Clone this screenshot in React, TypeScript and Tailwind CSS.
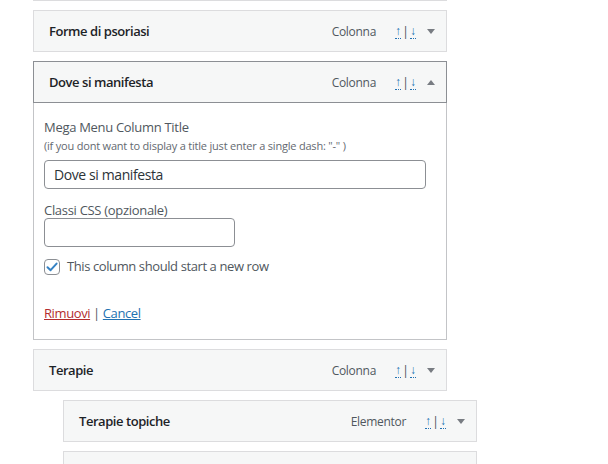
import React from "react";

const font = "font-['Open_Sans','Noto_Sans',sans-serif]";

function Arrows() {
  return (
    <span className="flex items-center text-[12px] leading-none text-[#2271b1]">
      <span className="w-[6px] flex justify-center border-b border-dotted border-[#2271b1] pb-[1px]">↑</span>
      <span className="w-[9px] flex justify-center text-[#50575e] text-[13px]">|</span>
      <span className="w-[6px] flex justify-center border-b border-dotted border-[#2271b1] pb-[1px]">↓</span>
    </span>
  );
}

function Triangle({ up }: { up?: boolean }) {
  return up ? (
    <span className="block w-0 h-0 border-l-[4px] border-r-[4px] border-b-[5px] border-l-transparent border-r-transparent border-b-[#787c82]" />
  ) : (
    <span className="block w-0 h-0 border-l-[4px] border-r-[4px] border-t-[5px] border-l-transparent border-r-transparent border-t-[#787c82]" />
  );
}

function Header({
  title,
  type,
  active,
  up,
}: {
  title: string;
  type: string;
  active?: boolean;
  up?: boolean;
}) {
  return (
    <div
      className={`flex items-center h-[42px] bg-[#f6f7f7] border pl-[15px] pr-[11px] pt-[1px] ${
        active ? "border-[#8c8f94]" : "border-[#dcdcde]"
      }`}
    >
      <span className="flex-1 text-[13px] font-semibold text-[#1d2327] tracking-[-0.45px]">{title}</span>
      {type && (
        <>
          <span className="text-[12px] text-[#50575e] tracking-[-0.3px]">{type}</span>
          <span className="ml-[19px]">
            <Arrows />
          </span>
          <span className="ml-[11px]">
            <Triangle up={up} />
          </span>
        </>
      )}
    </div>
  );
}

export default function App() {
  return (
    <div className={`w-[608px] h-[464px] bg-white overflow-hidden pl-[33px] ${font}`}>
      <div className="w-[414px] h-[1px] bg-[#dcdcde]" />
      <div className="w-[414px] mt-[9px]">
        <Header title="Forme di psoriasi" type="Colonna" />
      </div>
      <div className="w-[414px] mt-[9px]">
        <Header title="Dove si manifesta" type="Colonna" active up />
        <div className="border border-t-0 border-[#c3c4c7] px-[10px] pt-[15px] h-[237px]">
          <div className="text-[13px] leading-[18px] text-[#50575e] tracking-[-0.3px]">Mega Menu Column Title</div>
          <div className="mt-[3px] text-[11px] leading-[14px] text-[#646970] tracking-[-0.2px]">
            (if you dont want to display a title just enter a single dash: "-" )
          </div>
          <div className="mt-[7px] w-[382px] h-[29px] rounded-[4px] border border-[#8c8f94] flex items-center px-[9px] text-[14px] text-[#2c3338] tracking-[-0.4px]">
            Dove si manifesta
          </div>
          <div className="mt-[13px] text-[13px] leading-[16px] text-[#50575e] tracking-[-0.3px]">Classi CSS (opzionale)</div>
          <div className="w-[191px] h-[29px] rounded-[4px] border border-[#8c8f94]" />
          <div className="mt-[10px] h-[20px] flex items-center">
            <span className="w-[16px] h-[16px] rounded-[4px] border border-[#8c8f94] flex items-center justify-center bg-white">
              <svg width="14" height="14" viewBox="0 0 14 14">
                <path d="M2.5 7.2 L5.6 10.2 L11.6 3.6" fill="none" stroke="#3582c4" strokeWidth="2" strokeLinecap="round" strokeLinejoin="round" />
              </svg>
            </span>
            <span className="ml-[7px] text-[13px] text-[#50575e] tracking-[-0.4px]">This column should start a new row</span>
          </div>
          <div className="mt-[26px] text-[13px] leading-[20px] tracking-[-0.4px]">
            <span className="text-[#b32d2e] underline">Rimuovi</span>
            <span className="text-[#50575e]"> | </span>
            <span className="text-[#2271b1] underline">Cancel</span>
          </div>
        </div>
      </div>
      <div className="w-[414px] mt-[9px]">
        <Header title="Terapie" type="Colonna" />
      </div>
      <div className="w-[414px] mt-[9px] ml-[30px]">
        <Header title="Terapie topiche" type="Elementor" />
      </div>
      <div className="w-[414px] mt-[9px] ml-[30px]">
        <Header title="" type="" />
      </div>
    </div>
  );
}
